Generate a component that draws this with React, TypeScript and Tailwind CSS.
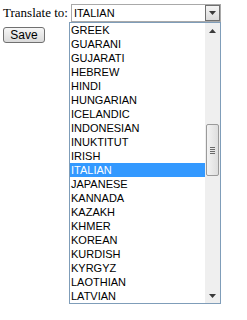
import { useState } from "react";

const languages = [
  "GREEK", "GUARANI", "GUJARATI", "HEBREW", "HINDI", "HUNGARIAN", "ICELANDIC",
  "INDONESIAN", "INUKTITUT", "IRISH", "ITALIAN", "JAPANESE", "KANNADA", "KAZAKH",
  "KHMER", "KOREAN", "KURDISH", "KYRGYZ", "LAOTHIAN", "LATVIAN",
];

function Arrow({ up }: { up?: boolean }) {
  return (
    <svg width="7" height="4" viewBox="0 0 7 4" className="block">
      <path d={up ? "M0 4 L3.5 0 L7 4 Z" : "M0 0 L7 0 L3.5 4 Z"} fill="#3a3a3a" />
    </svg>
  );
}

export default function App() {
  const [selected, setSelected] = useState("ITALIAN");

  return (
    <div className="relative w-[247px] h-[320px] bg-white overflow-hidden" style={{ fontFamily: '"Liberation Sans", Arial, sans-serif' }}>
      <div className="flex items-start pt-[4px] pl-[3px]">
        <span className="text-[13px] leading-[18px] text-black" style={{ fontFamily: '"Liberation Serif", "Times New Roman", serif' }}>
          Translate to:
        </span>
        <div className="ml-[3px] flex h-[18px] w-[150px] border border-[#a9a9a9] bg-white">
          <span className="flex-1 pl-[2px] text-[11px] leading-[16px] text-black">{selected}</span>
          <div className="flex w-[15px] items-center justify-center border border-[#707070] bg-gradient-to-b from-[#f4f4f4] to-[#dcdcdc]">
            <Arrow />
          </div>
        </div>
      </div>

      <button className="ml-[3px] mt-[5px] h-[16px] w-[42px] rounded-[3px] border border-[#707070] bg-gradient-to-b from-[#f6f6f6] to-[#dadada] text-[12px] leading-[14px] text-black">
        Save
      </button>

      <div className="absolute left-[69px] top-[22px] flex h-[282px] w-[152px] border border-[#7f9db9] bg-white">
        <ul className="flex-1">
          {languages.map((lang) => (
            <li
              key={lang}
              onClick={() => setSelected(lang)}
              className={
                lang === selected
                  ? "h-[14px] bg-[#3399ff] pl-[1px] text-[11px] leading-[14px] text-white"
                  : "h-[14px] pl-[1px] text-[11px] leading-[14px] text-black"
              }
            >
              {lang}
            </li>
          ))}
        </ul>
        <div className="relative flex w-[15px] flex-col items-center bg-[#efefef]">
          <div className="flex h-[15px] items-center justify-center">
            <Arrow up />
          </div>
          <div className="absolute left-[1px] top-[101px] flex h-[52px] w-[13px] items-center justify-center rounded-[2px] border border-[#9a9a9a] bg-gradient-to-r from-[#f3f3f3] to-[#dedede]">
            <div className="flex flex-col gap-[1px]">
              <div className="h-px w-[5px] bg-[#6a6a6a]" />
              <div className="h-px w-[5px] bg-[#6a6a6a]" />
              <div className="h-px w-[5px] bg-[#6a6a6a]" />
              <div className="h-px w-[5px] bg-[#6a6a6a]" />
            </div>
          </div>
          <div className="mt-auto flex h-[15px] items-center justify-center">
            <Arrow />
          </div>
        </div>
      </div>
    </div>
  );
}
